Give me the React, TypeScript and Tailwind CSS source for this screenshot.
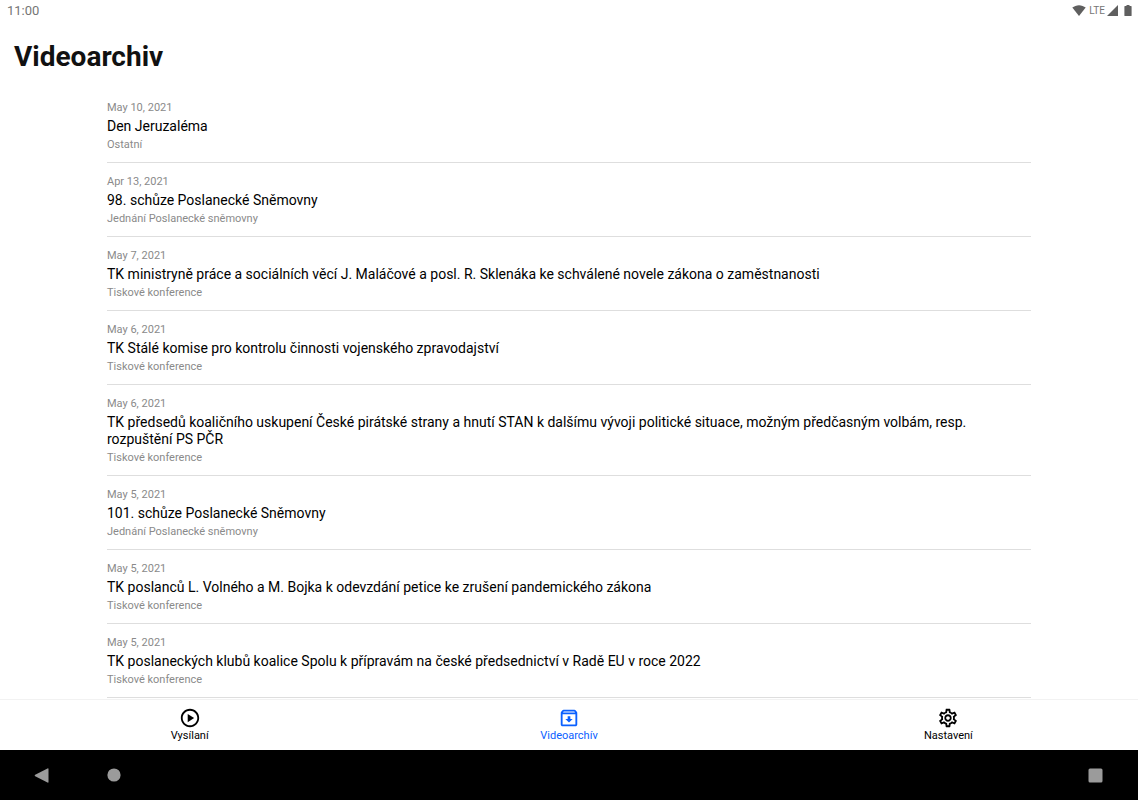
import { useState } from "react";
import { MdOutlinePlayCircle, MdOutlineArchive, MdOutlineSettings } from "react-icons/md";

const recordings = [
  { id: 1, date: "May 10, 2021", title: "Den Jeruzaléma", category: "Ostatní" },
  { id: 2, date: "Apr 13, 2021", title: "98. schůze Poslanecké Sněmovny", category: "Jednání Poslanecké sněmovny" },
  { id: 3, date: "May 7, 2021", title: "TK ministryně práce a sociálních věcí J. Maláčové a posl. R. Sklenáka ke schválené novele zákona o zaměstnanosti", category: "Tiskové konference" },
  { id: 4, date: "May 6, 2021", title: "TK Stálé komise pro kontrolu činnosti vojenského zpravodajství", category: "Tiskové konference" },
  { id: 5, date: "May 6, 2021", title: "TK předsedů koaličního uskupení České pirátské strany a hnutí STAN k dalšímu vývoji politické situace, možným předčasným volbám, resp. rozpuštění PS PČR", category: "Tiskové konference" },
  { id: 6, date: "May 5, 2021", title: "101. schůze Poslanecké Sněmovny", category: "Jednání Poslanecké sněmovny" },
  { id: 7, date: "May 5, 2021", title: "TK poslanců L. Volného a M. Bojka k odevzdání petice ke zrušení pandemického zákona", category: "Tiskové konference" },
  { id: 8, date: "May 5, 2021", title: "TK poslaneckých klubů koalice Spolu k přípravám na české předsednictví v Radě EU v roce 2022", category: "Tiskové konference" },
];

const tabs = [
  { id: "live", label: "Vysílaní", Icon: MdOutlinePlayCircle },
  { id: "archive", label: "Videoarchív", Icon: MdOutlineArchive },
  { id: "settings", label: "Nastavení", Icon: MdOutlineSettings },
];

function StatusBar() {
  return (
    <div className="flex h-[21px] shrink-0 items-center justify-between pl-[7px] pr-[6px] text-[#757575]">
      <span className="text-[13px]">11:00</span>
      <div className="flex items-center text-[#5f5f5f]">
        <svg width="14" height="11" viewBox="0 0 14 11" fill="currentColor" aria-hidden="true">
          <path d="M7 11 0.3 2.6C2.2 1.1 4.5 0.2 7 0.2s4.8 0.9 6.7 2.4z" />
        </svg>
        <span className="ml-[3px] text-[10px] text-[#757575]">LTE</span>
        <svg className="ml-[2px]" width="11" height="11" viewBox="0 0 11 11" fill="currentColor" aria-hidden="true">
          <path d="M11 0v11H0z" />
        </svg>
        <svg className="ml-[6px]" width="8" height="11" viewBox="0 0 8 11" fill="currentColor" aria-hidden="true">
          <path d="M2.5 0h3v1H7q.6 0 .6.6v8.8q0 .6-.6.6H1q-.6 0-.6-.6V1.6Q.4 1 1 1h1.5z" />
        </svg>
      </div>
    </div>
  );
}

function SystemBar() {
  return (
    <div className="flex h-[50px] shrink-0 items-center justify-between bg-black pl-[34px] pr-[35px] text-[#9b9b9b]">
      <div className="flex items-center gap-[58px]">
        <button aria-label="Back">
          <svg width="15" height="15" viewBox="0 0 15 15" fill="currentColor">
            <path d="M13.5 0.4q1-.5 1 .6v13q0 1.1-1 .6L1.2 8.2q-1-.7 0-1.4z" />
          </svg>
        </button>
        <button aria-label="Home">
          <svg width="14" height="14" viewBox="0 0 14 14" fill="currentColor">
            <circle cx="7" cy="7" r="6.6" />
          </svg>
        </button>
      </div>
      <button aria-label="Recent apps">
        <svg width="15" height="15" viewBox="0 0 15 15" fill="currentColor">
          <rect x="0.5" y="0.5" width="14" height="14" rx="1.5" />
        </svg>
      </button>
    </div>
  );
}

export default function App() {
  const [active, setActive] = useState("archive");

  return (
    <div className="flex h-screen flex-col bg-white font-[Roboto,sans-serif] text-[#111111]">
      <StatusBar />

      <header className="shrink-0 px-[14px] pt-[19px] pb-[15px]">
        <h1 className="text-[28px] leading-[34px] font-bold">Videoarchiv</h1>
      </header>

      <main className="min-h-0 flex-1 overflow-hidden">
        <ul className="mx-auto max-w-[924px]">
          {recordings.map((r) => (
            <li key={r.id} className="border-b border-[#dedede]">
              <a href={`#${r.id}`} className="block pt-3 pb-[10px]">
                <p className="text-[11px] leading-[14px] text-[#8a8a8a]">{r.date}</p>
                <h2 className="my-[3px] text-[14px] leading-[17px] text-black">{r.title}</h2>
                <p className="text-[11px] leading-[14px] text-[#8a8a8a]">{r.category}</p>
              </a>
            </li>
          ))}
        </ul>
      </main>

      <nav className="grid h-[51px] shrink-0 grid-cols-3 border-t border-[#f2f2f2]">
        {tabs.map(({ id, label, Icon }) => (
          <button
            key={id}
            onClick={() => setActive(id)}
            className={`flex flex-col items-center pt-[7px] ${active === id ? "text-[#0a60ff]" : "text-black"}`}
          >
            <Icon size={22} />
            <span className="text-[11px] leading-[14px]">{label}</span>
          </button>
        ))}
      </nav>

      <SystemBar />
    </div>
  );
}
